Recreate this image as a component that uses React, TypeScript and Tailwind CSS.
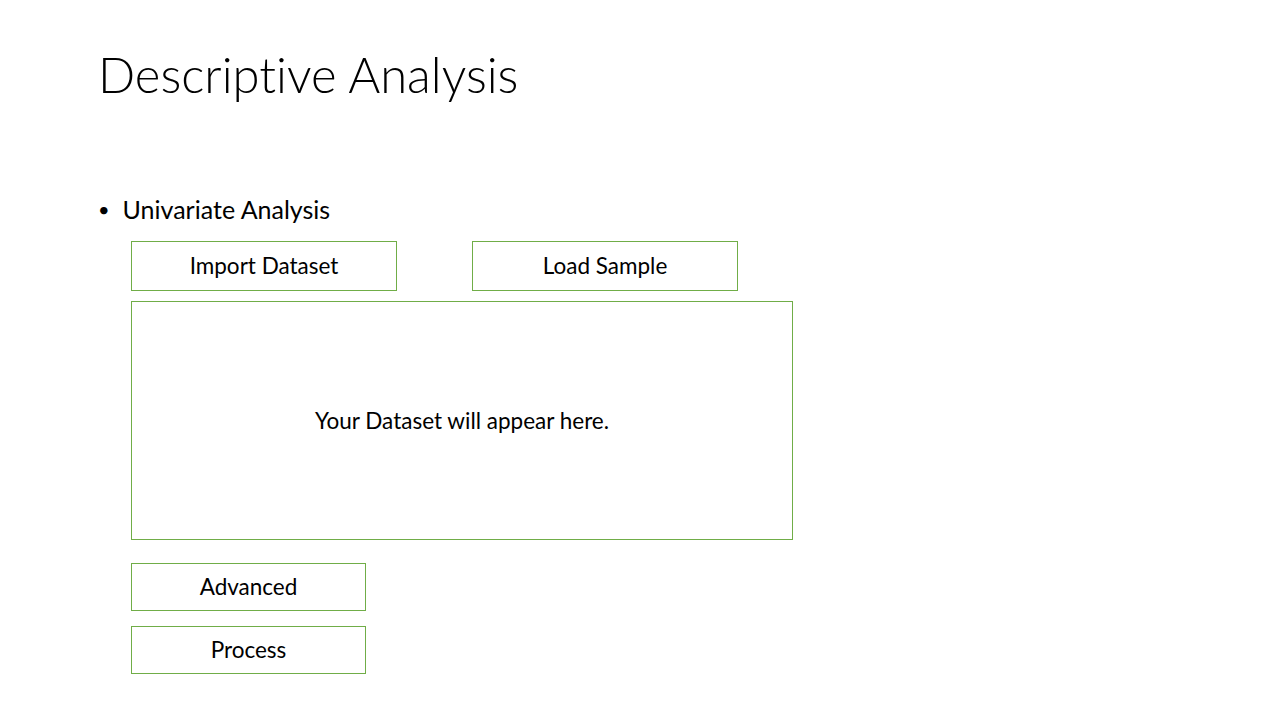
import React from 'react'

const box = 'flex items-center justify-center border border-[#70ad47] bg-white text-[22.5px] text-black'

export default function App() {
  return (
    <div className="w-[1280px] h-[720px] bg-white overflow-hidden font-['Lato','Open_Sans',sans-serif] text-black [font-variant-ligatures:none]">
      <div className="pl-[98px] pt-[44px]">
        <h1 className="text-[49px] font-light leading-[60px]">Descriptive Analysis</h1>
      </div>
      <div className="pl-[98px] pt-[90px] flex items-center gap-[13px] text-[25px] leading-[30px]">
        <span className="text-[20px]">•</span>
        <span>Univariate Analysis</span>
      </div>
      <div className="pl-[131px] pt-[17px] flex flex-col">
        <div className="flex gap-[75px]">
          <div className={box + ' w-[266px] h-[50px]'}>Import Dataset</div>
          <div className={box + ' w-[266px] h-[50px]'}>Load Sample</div>
        </div>
        <div className={box + ' mt-[10px] w-[662px] h-[239px]'}>Your Dataset will appear here.</div>
        <div className={box + ' mt-[23px] w-[235px] h-[48px]'}>Advanced</div>
        <div className={box + ' mt-[15px] w-[235px] h-[48px]'}>Process</div>
      </div>
    </div>
  )
}
